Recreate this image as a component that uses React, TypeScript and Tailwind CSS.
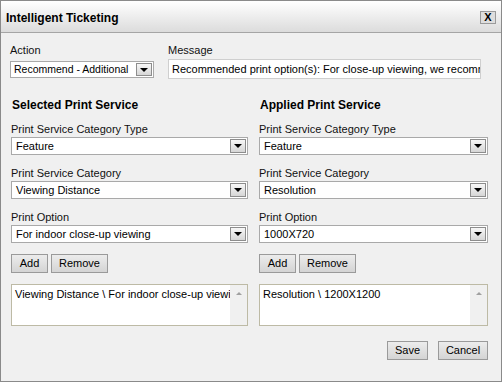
import React from "react";

const font = { fontFamily: '"Liberation Sans", Arial, sans-serif' };

function Arrow() {
  return (
    <div className="absolute right-[1px] top-[1px] bottom-[1px] w-[16px] border border-[#8d8d8d] bg-gradient-to-b from-[#f7f7f7] to-[#d6d6d6] flex items-center justify-center">
      <div className="w-0 h-0 border-l-[4px] border-r-[4px] border-t-[4px] border-l-transparent border-r-transparent border-t-black" />
    </div>
  );
}

function Select({ value, className = "" }: { value: string; className?: string }) {
  return (
    <div className={`relative h-[18px] bg-white border border-[#a9a9a9] ${className}`}>
      <div className="pl-[4px] pr-[20px] leading-[16px] text-[11px] text-black whitespace-nowrap overflow-hidden">{value}</div>
      <Arrow />
    </div>
  );
}

function Btn({ label, w }: { label: string; w: string }) {
  return (
    <div className={`${w} h-[19px] border border-[#9a9a9a] bg-gradient-to-b from-[#ececec] to-[#d4d4d4] flex items-center justify-center text-[11px] text-black`}>
      {label}
    </div>
  );
}

function Field({ label, value }: { label: string; value: string }) {
  return (
    <div className="flex flex-col">
      <div className="h-[13px] leading-[13px] text-[11px] text-[#111] mb-[1px]">{label}</div>
      <Select value={value} />
    </div>
  );
}

function ListBox({ text }: { text: string }) {
  return (
    <div className="relative h-[42px] bg-white border border-[#bdbaa5] flex">
      <div className="flex-1 pl-[3px] pt-[3px] text-[11px] leading-[13px] text-black whitespace-nowrap overflow-hidden">{text}</div>
      <div className="w-[17px] bg-[#f0f0f0] flex justify-center pt-[7px]">
        <div className="w-0 h-0 border-l-[3px] border-r-[3px] border-b-[3px] border-l-transparent border-r-transparent border-b-[#a0a0a0]" />
      </div>
    </div>
  );
}

function Column({
  heading,
  type,
  cat,
  opt,
  list,
  className = "",
}: {
  heading: string;
  type: string;
  cat: string;
  opt: string;
  list: string;
  className?: string;
}) {
  return (
    <div className={`flex flex-col ${className}`}>
      <div className="h-[15px] leading-[15px] text-[12px] font-bold text-black pl-[1px]">{heading}</div>
      <div className="mt-[10px] flex flex-col gap-[12px]">
        <Field label="Print Service Category Type" value={type} />
        <Field label="Print Service Category" value={cat} />
        <Field label="Print Option" value={opt} />
      </div>
      <div className="mt-[11px] flex gap-[3px]">
        <Btn label="Add" w="w-[37px]" />
        <Btn label="Remove" w="w-[57px]" />
      </div>
      <div className="mt-[11px]">
        <ListBox text={list} />
      </div>
    </div>
  );
}

export default function App() {
  return (
    <div style={font} className="w-[502px] h-[382px] bg-[#f0f0f0] border border-[#8a8a8a] flex flex-col overflow-hidden">
      <div className="h-[32px] border-b border-[#a5a5a5] bg-gradient-to-b from-[#ffffff] to-[#dcdcdc] flex items-center justify-between pl-[5px] pr-[5px]">
        <div className="text-[12px] font-bold text-black leading-[14px] pt-[2px]">Intelligent Ticketing</div>
        <div className="w-[16px] h-[13px] mt-[1px] border border-[#9a9a9a] bg-[#dedede] flex items-center justify-center text-[11px] leading-[11px] text-black font-bold">
          X
        </div>
      </div>
      <div className="flex flex-col pt-[11px] pl-[9px] pr-[12px]">
        <div className="flex gap-[14px]">
          <div className="w-[144px] flex flex-col">
            <div className="h-[16px] leading-[13px] text-[11px] text-[#111]">Action</div>
            <div className="relative h-[17px] mt-[1px] bg-white border border-[#a9a9a9]">
              <div className="pl-[3px] pr-[18px] leading-[15px] text-[10.5px] text-black whitespace-nowrap overflow-hidden">Recommend - Additional</div>
              <Arrow />
            </div>
          </div>
          <div className="w-[313px] flex flex-col">
            <div className="h-[15px] leading-[13px] text-[11px] text-[#111]">Message</div>
            <div className="h-[20px] bg-white border border-[#cfcfcf] pl-[3px] leading-[18px] text-[11px] text-black whitespace-nowrap overflow-hidden">
              Recommended print option(s): For close-up viewing, we recommend a resolution of 1200X1200 or higher.
            </div>
          </div>
        </div>
        <div className="mt-[19px] flex pl-[1px] gap-[11px]">
          <Column
            className="w-[237px]"
            heading="Selected Print Service"
            type="Feature"
            cat="Viewing Distance"
            opt="For indoor close-up viewing"
            list="Viewing Distance \ For indoor close-up viewing"
          />
          <Column
            className="w-[229px]"
            heading="Applied Print Service"
            type="Feature"
            cat="Resolution"
            opt="1000X720"
            list="Resolution \ 1200X1200"
          />
        </div>
        <div className="mt-[15px] flex justify-end gap-[10px] pr-[1px]">
          <Btn label="Save" w="w-[41px]" />
          <Btn label="Cancel" w="w-[50px]" />
        </div>
      </div>
    </div>
  );
}
